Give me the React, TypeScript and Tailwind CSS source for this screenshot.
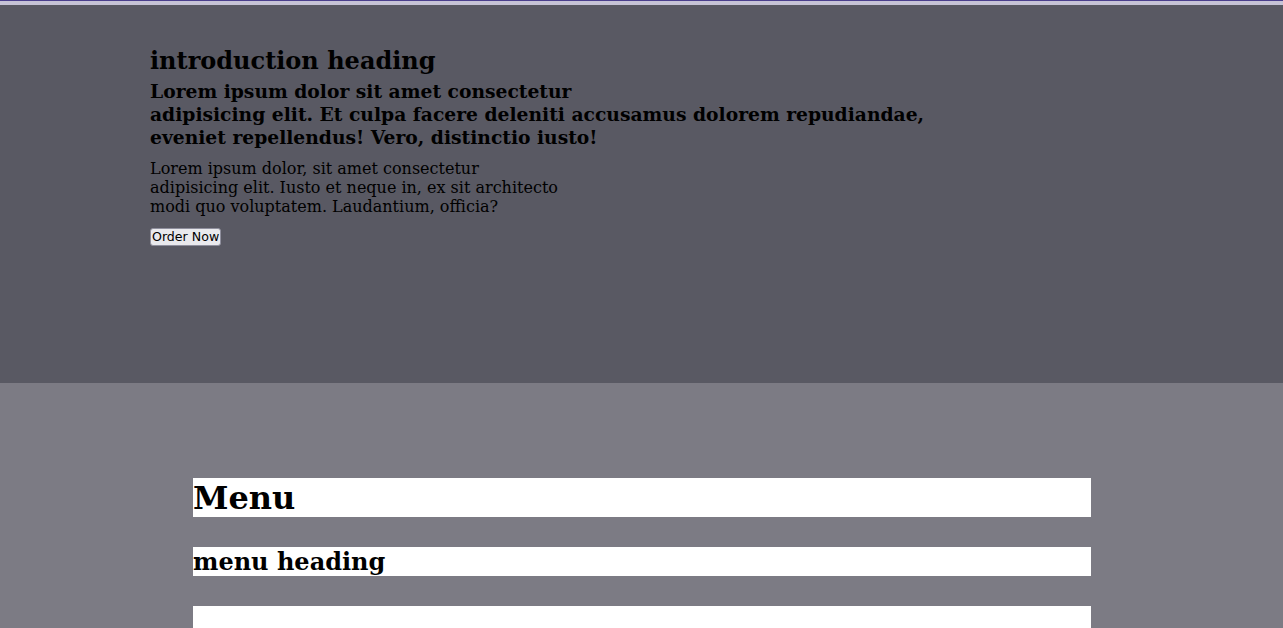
export default function App() {
  return (
    <div className="min-h-screen bg-[#7c7b84] font-['DejaVu_Serif',serif] text-black">
      {/* top stripe */}
      <div className="h-px bg-[#4a3f8c]" />
      <div className="h-[4px] bg-[#c6c3d6]" />

      {/* Intro */}
      <header className="h-[378px] bg-[#595963] pl-[150px] pt-[42px]">
        <h1 className="text-[24px] font-bold leading-[28px]">introduction heading</h1>
        <h2 className="mt-[5px] text-[18.72px] font-bold leading-[23px]">
          Lorem ipsum dolor sit amet consectetur
          <br />
          adipisicing elit. Et culpa facere deleniti accusamus dolorem repudiandae,
          <br />
          eveniet repellendus! Vero, distinctio iusto!
        </h2>
        <p className="mt-[10px] text-[16px] leading-[19px]">
          Lorem ipsum dolor, sit amet consectetur
          <br />
          adipisicing elit. Iusto et neque in, ex sit architecto
          <br />
          modi quo voluptatem. Laudantium, officia?
        </p>
        <button className="mt-[12px] h-[18px] rounded-[3px] border border-[#8f8f9d] bg-[#e9e9ed] px-[1px] font-['DejaVu_Sans',sans-serif] text-[12.6px] leading-[14px] text-black">
          Order Now
        </button>
      </header>

      {/* Menu */}
      <section className="pt-[95px] pb-10">
        <div className="ml-[193px] w-[898px]">
          <h1 className="h-[39px] bg-white text-[32px] font-bold leading-[41px]">Menu</h1>
          <h2 className="mt-[30px] h-[29px] bg-white text-[24px] font-bold leading-[29px]">menu heading</h2>
          <div className="mt-[30px] h-[120px] bg-white" />
        </div>
      </section>
    </div>
  );
}
